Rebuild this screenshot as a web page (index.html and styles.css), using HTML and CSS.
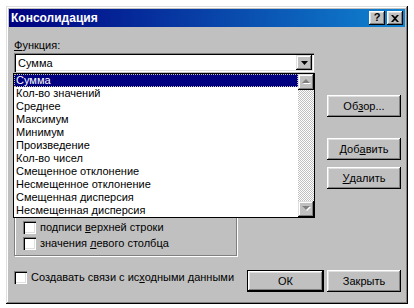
FILE: index.html
```html
<!DOCTYPE html>
<html lang="ru">
<head>
<meta charset="utf-8">
<title>Консолидация</title>
<link rel="stylesheet" href="styles.css">
</head>
<body>
<div class="window">
  <div class="titlebar">
    <span class="title">Консолидация</span>
    <div class="tbtns">
      <span class="tbtn help">?</span>
      <span class="tbtn"><svg width="8" height="7" viewBox="0 0 8 7"><path d="M0 0h2l2 2 2-2h2L5 3.5 8 7H6L4 5 2 7H0l3-3.5z" fill="#000"/></svg></span>
    </div>
  </div>
  <div class="content">
    <div class="top">
      <div class="left">
        <div class="label"><u>Ф</u>ункция:</div>
        <div class="combo">
          <span class="combo-text">Сумма</span>
          <span class="combo-btn"><svg width="7" height="4" viewBox="0 0 7 4"><path d="M0 0h7L3.5 4z" fill="#000"/></svg></span>
        </div>
        <div class="group">
          <div class="cb"><span class="box"></span><span>подписи <u>в</u>ерхней строки</span></div>
          <div class="cb"><span class="box"></span><span>значения <u>л</u>евого столбца</span></div>
        </div>
      </div>
      <div class="right">
        <div class="btn b-browse">Об<u>з</u>ор...</div>
        <div class="btn b-add">Доб<u>а</u>вить</div>
        <div class="btn b-del"><u>У</u>далить</div>
      </div>
    </div>
    <div class="bottom">
      <div class="cb links"><span class="box"></span><span>Создавать связи с ис<u>х</u>одными данными</span></div>
      <div class="btn default">ОК</div>
      <div class="btn close">Закрыть</div>
    </div>
  </div>
  <div class="dropdown">
    <ul class="items">
      <li class="sel">Сумма</li>
      <li>Кол-во значений</li>
      <li>Среднее</li>
      <li>Максимум</li>
      <li>Минимум</li>
      <li>Произведение</li>
      <li>Кол-во чисел</li>
      <li>Смещенное отклонение</li>
      <li>Несмещенное отклонение</li>
      <li>Смещенная дисперсия</li>
      <li>Несмещенная дисперсия</li>
    </ul>
    <div class="sbar">
      <span class="sbtn"><svg width="9" height="6" viewBox="0 0 9 6"><path d="M4 0l4 4H0z" fill="#fff" transform="translate(1 1)"/><path d="M4 0l4 4H0z" fill="#808080"/></svg></span>
      <span class="track"></span>
      <span class="sbtn"><svg width="9" height="6" viewBox="0 0 9 6"><path d="M0 0h8L4 4z" fill="#fff" transform="translate(1 1)"/><path d="M0 0h8L4 4z" fill="#808080"/></svg></span>
    </div>
  </div>
</div>
</body>
</html>
```
FILE: styles.css
```css
* { box-sizing: border-box; }
html, body { margin: 0; }
body {
  background: #fff;
  padding: 6px;
  font-family: "Liberation Sans", Arial, sans-serif;
  font-size: 11px;
  color: #000;
}
ul { margin: 0; padding: 0; list-style: none; }

.window {
  position: relative;
  width: 402px;
  height: 298px;
  padding: 3px;
  background: #c0c0c0;
  box-shadow: inset -1px -1px #000, inset 1px 1px #dfdfdf, inset -2px -2px #808080, inset 2px 2px #fff;
}

.titlebar {
  height: 18px;
  display: flex;
  align-items: center;
  justify-content: space-between;
  padding: 0 2px;
  background: linear-gradient(to right, #000080, #1084d0);
}
.title { color: #fff; font-weight: bold; font-size: 12px; }
.tbtns { display: flex; gap: 2px; }
.tbtn {
  width: 16px;
  height: 14px;
  display: flex;
  align-items: center;
  justify-content: center;
  background: #c0c0c0;
  box-shadow: inset -1px -1px #000, inset 1px 1px #fff, inset -2px -2px #808080, inset 2px 2px #dfdfdf;
}
.help { font-weight: bold; font-size: 11px; line-height: 1; padding-bottom: 1px; }

.content { padding: 12px 4px 0 5px; }
.top { display: flex; gap: 13px; }
.left { width: 300px; }
.right { width: 74px; display: flex; flex-direction: column; }

.label { height: 13px; line-height: 13px; margin-bottom: 1px; }

.combo {
  height: 19px;
  display: flex;
  align-items: center;
  justify-content: space-between;
  padding: 2px;
  background: #fff;
  box-shadow: inset 1px 1px #808080, inset 2px 2px #000, inset -1px -1px #fff, inset -2px -2px #dfdfdf;
}
.combo-text { padding-left: 2px; }
.combo-btn {
  width: 16px;
  height: 15px;
  display: flex;
  align-items: center;
  justify-content: center;
  background: #c0c0c0;
  box-shadow: inset -1px -1px #000, inset 1px 1px #dfdfdf, inset -2px -2px #808080, inset 2px 2px #fff;
}

.group {
  width: 223px;
  margin-top: 56px;
  padding: 90px 0 4px 8px;
  border: 1px solid #808080;
  box-shadow: 1px 1px #fff, inset 1px 1px #fff;
}

.cb { display: flex; align-items: center; gap: 4px; height: 16px; }
.box {
  width: 13px;
  height: 13px;
  background: #fff;
  box-shadow: inset 1px 1px #808080, inset 2px 2px #000, inset -1px -1px #fff, inset -2px -2px #dfdfdf;
}

.btn {
  height: 22px;
  display: flex;
  align-items: center;
  justify-content: center;
  background: #c0c0c0;
  box-shadow: inset -1px -1px #000, inset 1px 1px #fff, inset -2px -2px #808080, inset 2px 2px #dfdfdf;
}
.b-browse { margin-top: 56px; }
.b-add { margin-top: 21px; }
.b-del { margin-top: 7px; }

.bottom {
  display: flex;
  align-items: flex-start;
  margin-top: 14px;
}
.links { flex: 1; margin-top: -1px; margin-left: 0; }
.bottom .default {
  width: 77px;
  border: 1px solid #000;
}
.bottom .close { width: 74px; margin-left: 3px; }

.dropdown {
  position: absolute;
  left: 7px;
  top: 67px;
  width: 302px;
  height: 145px;
  display: flex;
  background: #fff;
  border: 1px solid #000;
}
.items { flex: 1; }
.items li { height: 13px; line-height: 13px; padding-left: 2px; white-space: nowrap; }
.items .sel {
  background: #000080;
  color: #fff;
  outline: 1px dotted #c0c0a0;
  outline-offset: -1px;
}
.sbar { width: 16px; display: flex; flex-direction: column; }
.sbtn {
  height: 16px;
  display: flex;
  align-items: center;
  justify-content: center;
  background: #c0c0c0;
  box-shadow: inset -1px -1px #000, inset 1px 1px #dfdfdf, inset -2px -2px #808080, inset 2px 2px #fff;
}
.track {
  flex: 1;
  background: repeating-conic-gradient(#fff 0 25%, #c0c0c0 0 50%) 0 0 / 2px 2px;
}
```
